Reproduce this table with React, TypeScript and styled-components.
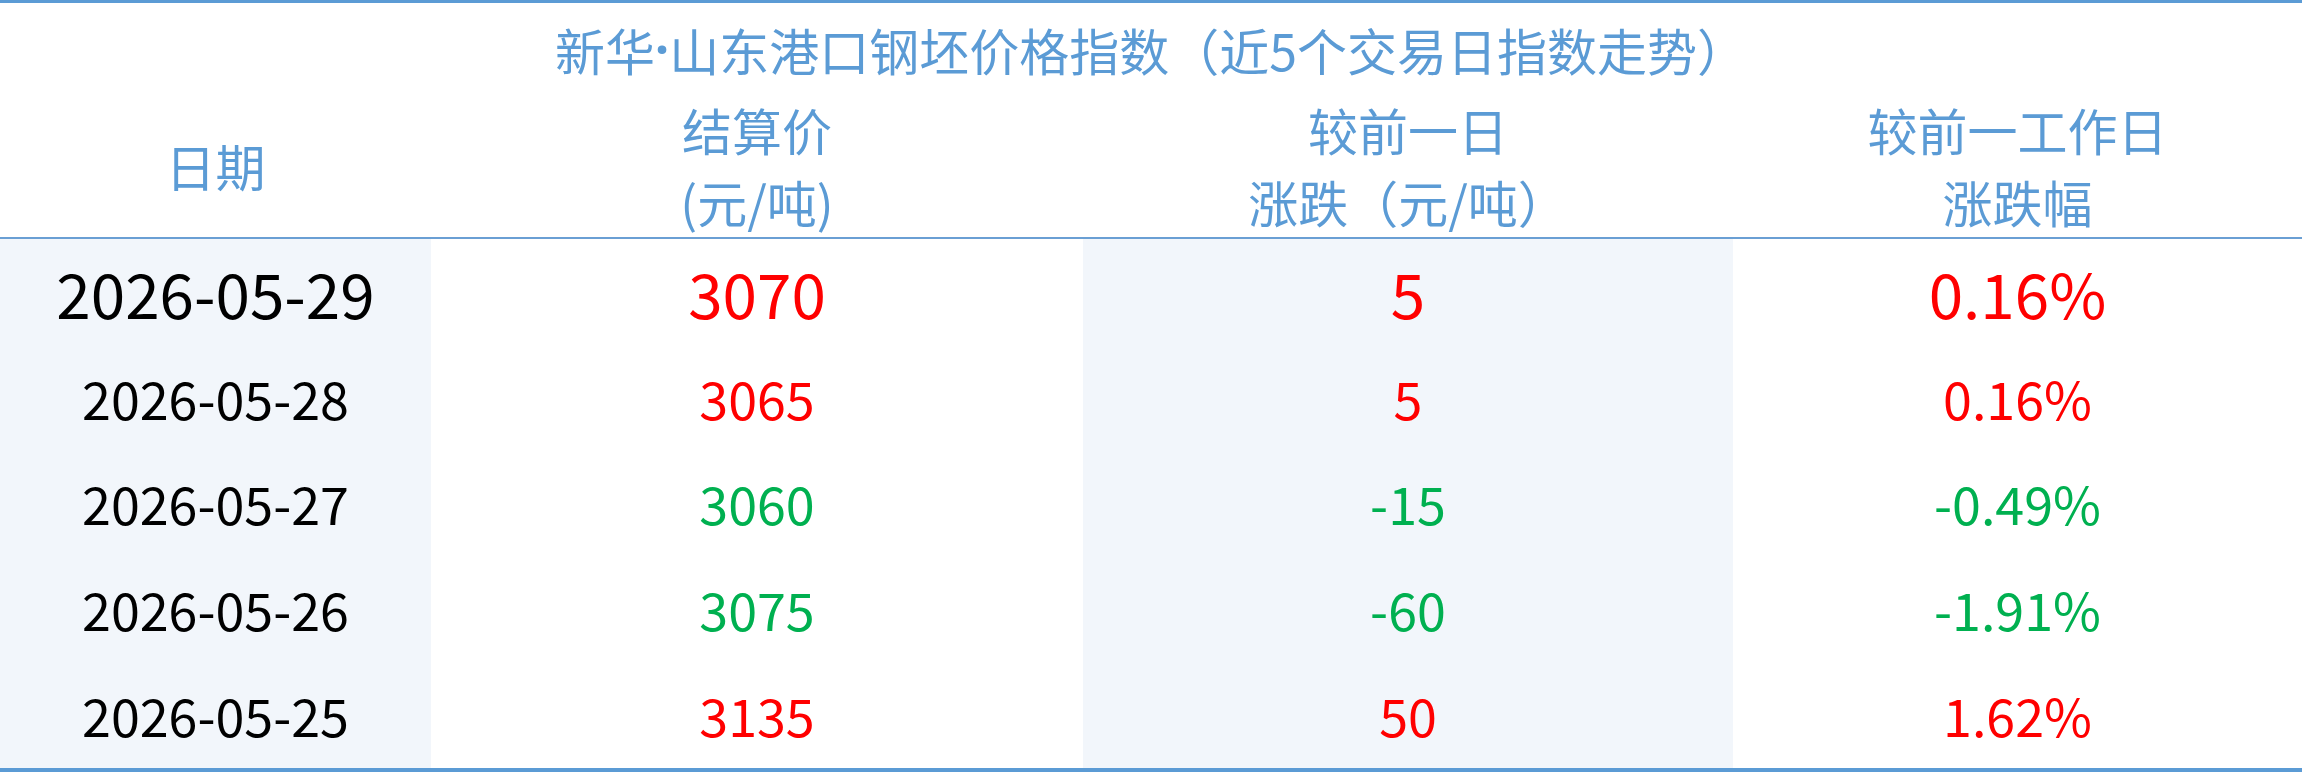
import styled, { createGlobalStyle } from "styled-components";

const GlobalStyle = createGlobalStyle`
  html, body {
    margin: 0;
    padding: 0;
    background: #ffffff;
  }
  body {
    font-family: "Noto Sans CJK SC", "Noto Sans", sans-serif;
  }
`;

type Trend = "up" | "down";

const rows: { date: string; price: string; change: string; pct: string; trend: Trend }[] = [
  { date: "2026-05-29", price: "3070", change: "5", pct: "0.16%", trend: "up" },
  { date: "2026-05-28", price: "3065", change: "5", pct: "0.16%", trend: "up" },
  { date: "2026-05-27", price: "3060", change: "-15", pct: "-0.49%", trend: "down" },
  { date: "2026-05-26", price: "3075", change: "-60", pct: "-1.91%", trend: "down" },
  { date: "2026-05-25", price: "3135", change: "50", pct: "1.62%", trend: "up" },
];

const Board = styled.div`
  width: 2302px;
  height: 772px;
  box-sizing: border-box;
  border-top: 3px solid #5b9bd5;
  border-bottom: 4px solid #5b9bd5;
  display: flex;
  flex-direction: column;
`;

const Title = styled.div`
  height: 90px;
  padding-top: 2px;
  box-sizing: border-box;
  display: flex;
  align-items: center;
  justify-content: center;
  color: #5b9bd5;
  font-size: 50px;
  line-height: 1;
  white-space: nowrap;
`;

// the interpunct is narrow in the reference, so take it from a Latin face
const Dot = styled.span`
  font-family: "Noto Sans", sans-serif;
  font-weight: 700;
`;

const Grid = styled.div`
  display: grid;
  grid-template-columns: 431fr 652fr 650fr 569fr;
`;

const HeadRow = styled(Grid)`
  height: 144px;
  border-bottom: 2px solid #6a9fd4;
`;

const HeadCell = styled.div`
  display: flex;
  flex-direction: column;
  align-items: center;
  justify-content: center;
  color: #5b9bd5;
  font-size: 50px;
  line-height: 72px;
  white-space: nowrap;
`;

const Body = styled.div`
  flex: 1;
  display: grid;
  grid-template-rows: repeat(5, 1fr);
`;

const BodyRow = styled(Grid)``;

const Cell = styled.div<{ $shaded?: boolean; $big?: boolean; $trend?: Trend }>`
  display: flex;
  align-items: center;
  justify-content: center;
  background: ${(p) => (p.$shaded ? "#f2f6fb" : "#ffffff")};
  color: ${(p) =>
    p.$trend === "up" ? "#ff0000" : p.$trend === "down" ? "#00b050" : "#000000"};
  font-size: ${(p) => (p.$big ? "62px" : "52px")};
  line-height: 1;
  white-space: nowrap;
`;

export default function App() {
  return (
    <>
      <GlobalStyle />
      <Board>
        <Title>
          新华<Dot>·</Dot>山东港口钢坯价格指数（近5个交易日指数走势）
        </Title>
        <HeadRow>
          <HeadCell>日期</HeadCell>
          <HeadCell>
            <span>结算价</span>
            <span>(元/吨)</span>
          </HeadCell>
          <HeadCell>
            <span>较前一日</span>
            <span>涨跌（元/吨）</span>
          </HeadCell>
          <HeadCell>
            <span>较前一工作日</span>
            <span>涨跌幅</span>
          </HeadCell>
        </HeadRow>
        <Body>
          {rows.map((r, i) => (
            <BodyRow key={r.date}>
              <Cell $shaded $big={i === 0}>
                {r.date}
              </Cell>
              <Cell $big={i === 0} $trend={r.trend}>
                {r.price}
              </Cell>
              <Cell $shaded $big={i === 0} $trend={r.trend}>
                {r.change}
              </Cell>
              <Cell $big={i === 0} $trend={r.trend}>
                {r.pct}
              </Cell>
            </BodyRow>
          ))}
        </Body>
      </Board>
    </>
  );
}
